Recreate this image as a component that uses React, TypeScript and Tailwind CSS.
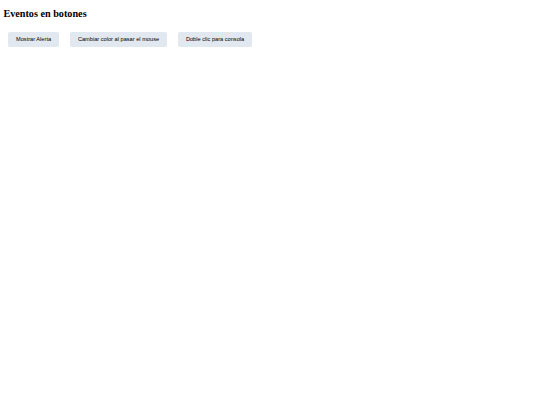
export default function App() {
  const buttons = ['Mostrar Alerta', 'Cambiar color al pasar el mouse', 'Doble clic para consola'];

  return (
    <div className="min-h-screen bg-white px-[3.4px] text-black">
      <h2 className="pt-[8.4px] text-[10.2px] font-bold leading-[1.15] font-['Liberation_Serif',serif]">
        Eventos en botones
      </h2>
      <div className="mt-[12px] flex gap-[10.8px] pl-[4.6px]">
        {buttons.map((label) => (
          <button
            key={label}
            className="flex h-[15.2px] items-center rounded-[2px] bg-[#e2e8f0] px-[8px] text-[5.65px] font-['Liberation_Sans',Arial,sans-serif] text-black"
          >
            {label}
          </button>
        ))}
      </div>
    </div>
  );
}
